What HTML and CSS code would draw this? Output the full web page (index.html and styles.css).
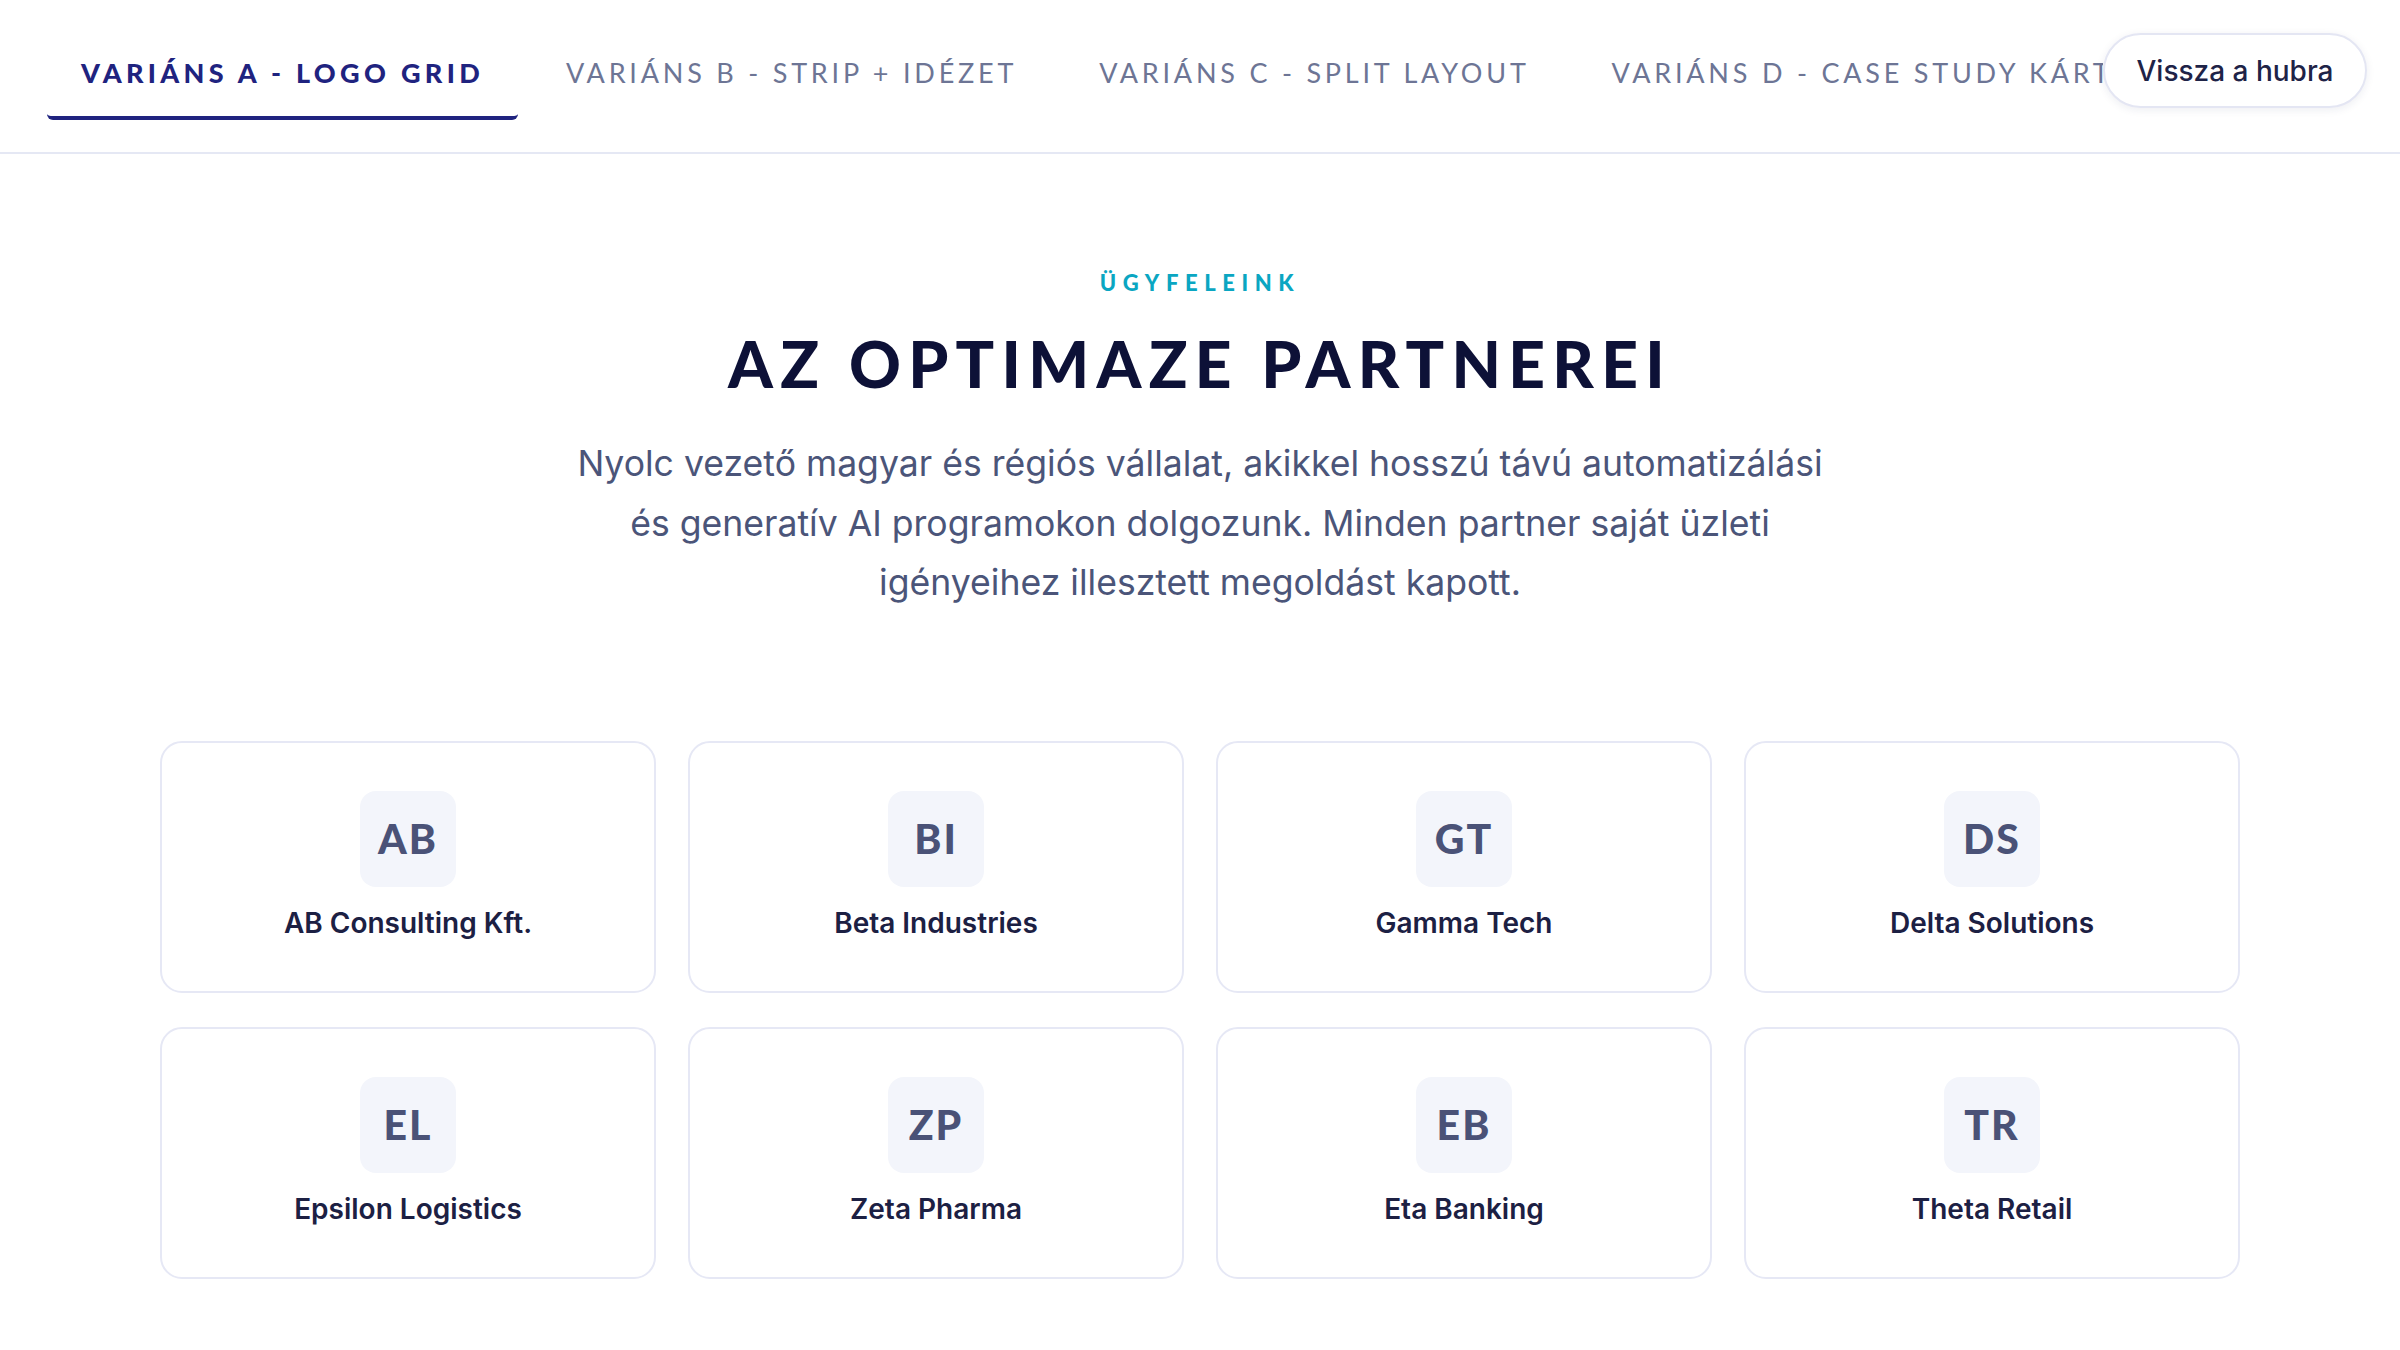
FILE: index.html
```html
<!DOCTYPE html>
<html lang="hu">
<head>
<meta charset="utf-8">
<title>Az Optimaze partnerei</title>
<link rel="stylesheet" href="styles.css">
</head>
<body>
<header class="topbar">
  <nav class="tabs">
    <a class="tab active">VARIÁNS A - LOGO GRID</a>
    <a class="tab">VARIÁNS B - STRIP + IDÉZET</a>
    <a class="tab">VARIÁNS C - SPLIT LAYOUT</a>
    <a class="tab">VARIÁNS D - CASE STUDY KÁRTYÁK</a>
  </nav>
  <a class="back-btn">Vissza a hubra</a>
</header>
<main class="partners">
  <p class="eyebrow">ÜGYFELEINK</p>
  <h1 class="title">AZ OPTIMAZE PARTNEREI</h1>
  <p class="lead">Nyolc vezető magyar és régiós vállalat, akikkel hosszú távú automatizálási és generatív AI programokon dolgozunk. Minden partner saját üzleti igényeihez illesztett megoldást kapott.</p>
  <div class="grid">
    <div class="card"><div class="logo">AB</div><div class="name">AB Consulting Kft.</div></div>
    <div class="card"><div class="logo">BI</div><div class="name">Beta Industries</div></div>
    <div class="card"><div class="logo">GT</div><div class="name">Gamma Tech</div></div>
    <div class="card"><div class="logo">DS</div><div class="name">Delta Solutions</div></div>
    <div class="card"><div class="logo">EL</div><div class="name">Epsilon Logistics</div></div>
    <div class="card"><div class="logo">ZP</div><div class="name">Zeta Pharma</div></div>
    <div class="card"><div class="logo">EB</div><div class="name">Eta Banking</div></div>
    <div class="card"><div class="logo">TR</div><div class="name">Theta Retail</div></div>
  </div>
</main>
</body>
</html>
```
FILE: styles.css
```css
* { box-sizing: border-box; }
html, body { margin: 0; padding: 0; background: #ffffff; }
body {
  font-family: Inter, "Noto Sans", sans-serif;
  color: #1c2043;
}

.topbar {
  display: flex;
  align-items: flex-start;
  height: 154px;
  border-bottom: 2px solid #e5e8f4;
}
.tabs {
  flex: 1;
  min-width: 0;
  display: flex;
  align-items: flex-start;
  gap: 14px;
  padding: 28px 0 0 47px;
  overflow: hidden;
  white-space: nowrap;
}
.tab {
  display: flex;
  align-items: center;
  height: 92px;
  padding: 0 34px;
  font-family: Lato, "Open Sans", sans-serif;
  font-size: 27px;
  font-weight: 400;
  letter-spacing: 0.14em;
  color: #6d7595;
  border-bottom: 4px solid transparent;
  border-radius: 6px;
  flex: none;
}
.tab.active {
  color: #1f237f;
  font-weight: 900;
  letter-spacing: 0.16em;
  border-bottom-color: #1f237f;
}
.back-btn {
  flex: none;
  margin: 33px 33px 0 0;
  height: 75px;
  width: 264px;
  display: flex;
  align-items: center;
  justify-content: center;
  background: #ffffff;
  border: 2px solid #e4e6f3;
  border-radius: 999px;
  box-shadow: 0 2px 8px rgba(30, 35, 90, 0.08);
  font-size: 28px;
  font-weight: 500;
  color: #1e2347;
}

.partners {
  padding: 114px 0 80px;
  text-align: center;
}
.eyebrow {
  margin: 0;
  font-family: Lato, sans-serif;
  font-weight: 900;
  font-size: 22px;
  line-height: 30px;
  letter-spacing: 0.3em;
  color: #0aa6c2;
}
.title {
  margin: 28px 0 0;
  font-family: Lato, sans-serif;
  font-weight: 900;
  font-size: 64px;
  line-height: 76px;
  letter-spacing: 0.114em;
  color: #0d1137;
}
.lead {
  max-width: 1290px;
  margin: 32px auto 0;
  font-size: 35.6px;
  line-height: 59.5px;
  color: #4b5579;
}
.grid {
  width: 2080px;
  margin: 128px auto 0;
  display: grid;
  grid-template-columns: repeat(4, 1fr);
  column-gap: 32px;
  row-gap: 34px;
}
.card {
  display: flex;
  flex-direction: column;
  align-items: center;
  gap: 18px;
  padding: 48px 20px 50px;
  border: 2px solid #e6e8f5;
  border-radius: 22px;
  background: #ffffff;
}
.logo {
  width: 96px;
  height: 96px;
  border-radius: 16px;
  background: #f3f5fb;
  display: flex;
  align-items: center;
  justify-content: center;
  font-family: Lato, sans-serif;
  font-weight: 900;
  font-size: 41px;
  letter-spacing: 0.05em;
  color: #4a5277;
}
.name {
  font-size: 28px;
  line-height: 36px;
  font-weight: 600;
  color: #1c2043;
}
```
